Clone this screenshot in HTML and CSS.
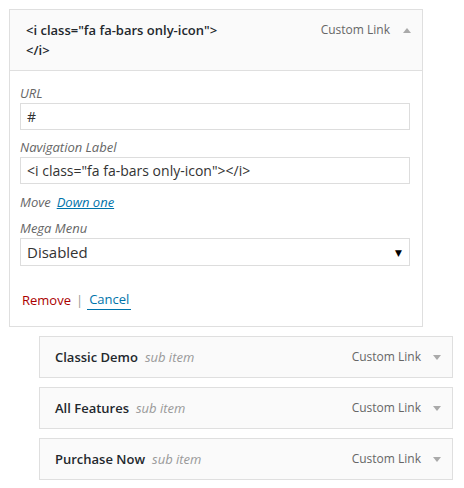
FILE: index.html
```html
<!DOCTYPE html>
<html>
<head>
<meta charset="utf-8">
<link rel="stylesheet" href="styles.css">
</head>
<body>
<div class="menu">
  <div class="item item-open">
    <div class="handle handle-open">
      <span class="title">&lt;i class="fa fa-bars only-icon"&gt;&lt;/i&gt;</span>
      <span class="controls"><span class="type">Custom Link</span><span class="arrow arrow-up"></span></span>
    </div>
    <div class="settings">
      <div class="field">
        <div class="label">URL</div>
        <div class="input">#</div>
      </div>
      <div class="field">
        <div class="label">Navigation Label</div>
        <div class="input">&lt;i class="fa fa-bars only-icon"&gt;&lt;/i&gt;</div>
      </div>
      <div class="move"><span class="label">Move</span><a class="move-link">Down one</a></div>
      <div class="field">
        <div class="label">Mega Menu</div>
        <div class="select"><span>Disabled</span><span class="select-arrow">▼</span></div>
      </div>
      <div class="actions"><a class="remove">Remove</a><span class="sep">|</span><a class="cancel">Cancel</a></div>
    </div>
  </div>

  <div class="item item-sub">
    <div class="handle">
      <span class="sub-title"><b>Classic Demo</b><i>sub item</i></span>
      <span class="controls"><span class="type">Custom Link</span><span class="arrow arrow-down"></span></span>
    </div>
  </div>
  <div class="item item-sub">
    <div class="handle">
      <span class="sub-title"><b>All Features</b><i>sub item</i></span>
      <span class="controls"><span class="type">Custom Link</span><span class="arrow arrow-down"></span></span>
    </div>
  </div>
  <div class="item item-sub">
    <div class="handle">
      <span class="sub-title"><b>Purchase Now</b><i>sub item</i></span>
      <span class="controls"><span class="type">Custom Link</span><span class="arrow arrow-down"></span></span>
    </div>
  </div>
</div>
</body>
</html>
```

FILE: styles.css
```css
* { box-sizing: border-box; }
body {
  margin: 0;
  background: #fff;
  font-family: "Open Sans", "DejaVu Sans", sans-serif;
  font-size: 13px;
  color: #333;
}
.menu {
  padding: 9px 0 0 9px;
  display: flex;
  flex-direction: column;
  gap: 9px;
}
.item {
  width: 414px;
  border: 1px solid #dfdfdf;
}
.item-sub {
  margin-left: 30px;
}
.handle {
  background: #fafafa;
  display: flex;
  justify-content: space-between;
  align-items: flex-start;
  padding: 10px 10px 10px 16px;
  height: 40px;
}
.handle-open {
  height: 61px;
  border-bottom: 1px solid #dfdfdf;
}
.item-sub .handle { padding: 10px 10px 10px 15px; }
.title {
  font-weight: 600;
  color: #23282d;
  line-height: 20px;
  width: 200px;
}
.controls {
  display: flex;
  align-items: center;
  height: 20px;
  color: #666;
}
.type { line-height: 20px; font-size: 12px; }
.arrow {
  width: 0;
  height: 0;
  border-left: 4px solid transparent;
  border-right: 4px solid transparent;
}
.arrow-up {
  border-bottom: 5px solid #aaa;
  margin: 0 1px 0 13px;
}
.arrow-down {
  border-top: 5px solid #aaa;
  margin: 1px 1px 0 12px;
}
.sub-title {
  line-height: 20px;
  color: #23282d;
}
.sub-title b { font-weight: 600; }
.sub-title i {
  color: #999;
  margin-left: 7px;
}
.settings {
  padding: 12px 12px 16px 10px;
}
.field { margin-bottom: 7px; }
.label {
  font-style: italic;
  color: #666;
  line-height: 20px;
}
.input, .select {
  height: 27px;
  border: 1px solid #ddd;
  padding: 0 6px;
  line-height: 25px;
  font-size: 14px;
  color: #333;
  background: #fff;
}
.move {
  display: flex;
  line-height: 20px;
  margin: 8px 0 6px;
}
.move-link {
  color: #0073aa;
  font-style: italic;
  text-decoration: underline;
  margin-left: 6px;
}
.select {
  height: 28px;
  font-size: 15px;
  display: flex;
  justify-content: space-between;
  align-items: center;
  padding: 0 7px 0 6px;
  color: #333;
}
.select-arrow {
  font-size: 9px;
  color: #000;
}
.actions {
  margin-top: 24px;
  line-height: 20px;
  display: flex;
  align-items: center;
}
.remove { color: #a00; margin-left: 2px; }
.sep { color: #999; margin: 0 4px 0 5px; }
.cancel {
  color: #0073aa;
  padding: 0 2px 0 2px;
  border-bottom: 1px solid #0073aa;
  line-height: 19px;
}
```
